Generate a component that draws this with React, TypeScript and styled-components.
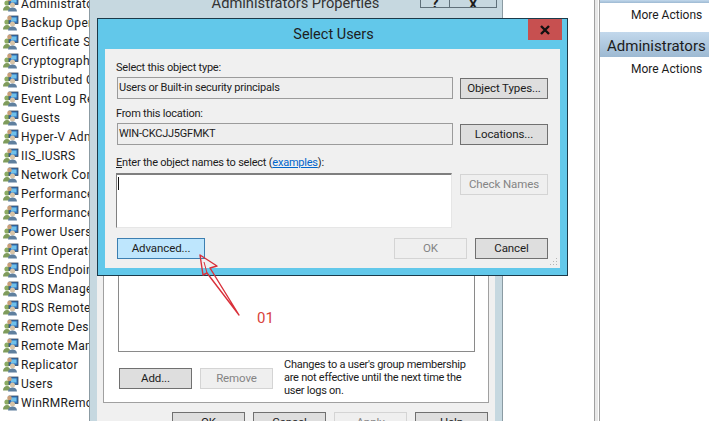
import React from "react";
import styled, { createGlobalStyle } from "styled-components";

const Global = createGlobalStyle`
  html, body { margin: 0; padding: 0; background: #fff; }
  body { font-family: Roboto, "Liberation Sans", sans-serif; font-size: 11px; color: #1c1c1c; }
`;

const Desktop = styled.div`
  position: relative;
  width: 709px;
  height: 421px;
  overflow: hidden;
  background: #fff;
`;

const GroupList = styled.ul`
  margin: -6px 0 0;
  padding: 0 0 0 3px;
  list-style: none;
  width: 86px;
  overflow: hidden;
`;

const GroupRow = styled.li`
  display: flex;
  align-items: center;
  gap: 2px;
  height: 19px;
  white-space: nowrap;
  font-size: 12px;
  letter-spacing: 0.3px;
`;

const IconSvg = styled.svg`
  flex: none;
`;

const ActionPane = styled.aside`
  position: absolute;
  top: 0;
  left: 594px;
  width: 115px;
  height: 421px;
  box-sizing: border-box;
  border-left: 1px solid #a0a0a0;
  padding-left: 4px;
  background: linear-gradient(#e8e8e8, #e8e8e8) 0 0 / 3px 100% no-repeat, #fff;
`;

const ActionHead = styled.div<{ $h: number }>`
  height: ${(p) => p.$h}px;
  border-left: 1px solid #a0a0a0;
  background: linear-gradient(#c2d8ec, #9db9d2);
  padding-left: 7px;
  font-size: 15px;
  line-height: 28px;
  white-space: nowrap;
  color: #1c1c1c;
`;

const ActionLink = styled.div<{ $h: number }>`
  height: ${(p) => p.$h}px;
  border-left: 1px solid #a0a0a0;
  padding: 4px 0 0 31px;
  box-sizing: border-box;
  white-space: nowrap;
  font-size: 12px;
  line-height: 16px;
`;

const PropsWindow = styled.section`
  position: absolute;
  left: 89px;
  top: -10px;
  width: 414px;
  height: 450px;
  box-sizing: border-box;
  border: 1px solid #8b9ba3;
  border-top: 0;
  background: #c6d8e0;
  padding: 0 7px;
  display: flex;
  flex-direction: column;
`;

const PropsTitleBar = styled.header`
  display: flex;
  align-items: flex-start;
  height: 30px;
  flex: none;
`;

const PropsTitle = styled.div`
  flex: 1;
  text-align: center;
  font-size: 14.7px;
  line-height: 26px;
  color: #333;
  padding-left: 74px;
`;

const Caption = styled.div`
  display: flex;
  height: 18px;
  flex: none;
  margin-right: -2px;
  border: 1px solid #5f707a;
  border-top: 0;
  box-sizing: border-box;
  background: #c6d8e0;
`;

const CaptionCell = styled.div<{ $w: number }>`
  width: ${(p) => p.$w}px;
  box-sizing: border-box;
  & + & { border-left: 1px solid #5f707a; }
  text-align: center;
  font-size: 15px;
  font-weight: 700;
  line-height: 26px;
  overflow: hidden;
`;

const PropsBody = styled.div`
  flex: 1;
  background: #f0f0f0;
  padding: 0 6px;
`;

const GroupBox = styled.div`
  height: 383px;
  box-sizing: border-box;
  border: 1px solid #a0a0a0;
  border-top: 0;
  background: #fff;
  padding: 0 13px 0 14px;
  display: flex;
  flex-direction: column;
  justify-content: flex-end;
`;

const MemberList = styled.div`
  height: 80px;
  flex: none;
  margin-bottom: 16px;
  box-sizing: border-box;
  border: 1px solid #8a8a8a;
  border-top: 0;
  background: #fff;
`;

const MemberActions = styled.div`
  display: flex;
  align-items: flex-start;
  gap: 8px;
  margin: 0 0 0 1px;
  height: 34px;
`;

const HelpText = styled.p`
  margin: -10px 0 0 3px;
  flex: none;
  line-height: 13px;
  font-size: 11px;
  letter-spacing: -0.25px;
  width: 186px;
`;

const PropsFooter = styled.div`
  display: flex;
  justify-content: flex-end;
  gap: 8px;
  margin-top: 9px;
  padding-right: 1px;
`;

const Btn = styled.div<{ $w?: number; $off?: boolean; $hot?: boolean }>`
  flex: none;
  width: ${(p) => p.$w ?? 73}px;
  height: 21px;
  box-sizing: border-box;
  border: 1px solid ${(p) => (p.$hot ? "#3c7fb1" : p.$off ? "#d4d4d4" : "#707070")};
  background: ${(p) => (p.$hot ? "#bee6fd" : p.$off ? "#efefef" : "#dedede")};
  color: ${(p) => (p.$off ? "#848484" : "#1c1c1c")};
  text-align: center;
  font-size: 11.5px;
  letter-spacing: -0.1px;
  line-height: 19px;
`;

const Dialog = styled.section`
  position: absolute;
  left: 97px;
  top: 18px;
  width: 471px;
  height: 258px;
  box-sizing: border-box;
  border: 1px solid #1b3a4a;
  background: #62c8ea;
  padding: 0 7px 7px;
  display: flex;
  flex-direction: column;
`;

const DialogTitleBar = styled.header`
  height: 30px;
  flex: none;
  display: flex;
`;

const DialogTitle = styled.div`
  flex: 1;
  text-align: center;
  font-size: 14.5px;
  line-height: 31px;
  color: #1e1e1e;
  padding-left: 34px;
`;

const CloseBtn = styled.div`
  width: 34px;
  height: 21px;
  margin-right: -2px;
  background: #c75050;
  display: flex;
  align-items: center;
  justify-content: center;
`;

const Panel = styled.div`
  flex: 1;
  background: #f0f0f0;
  padding: 11px 11px 0;
  display: flex;
  flex-direction: column;
  position: relative;
`;

const Label = styled.div<{ $mt?: number }>`
  height: 15px;
  line-height: 15px;
  font-size: 11px;
  letter-spacing: -0.22px;
  margin-top: ${(p) => p.$mt ?? 0}px;
`;

const Row = styled.div<{ $mt?: number }>`
  display: flex;
  gap: 7px;
  margin: ${(p) => p.$mt ?? 0}px 0 0 1px;
`;

const ReadField = styled.div`
  width: 336px;
  height: 22px;
  box-sizing: border-box;
  border: 1px solid #9b9b9b;
  background: #eeeeee;
  padding-left: 1px;
  line-height: 19px;
  font-size: 11px;
  letter-spacing: -0.22px;
`;

const ButtonNudge = styled.div`
  margin-top: 1px;
`;

const NamesBox = styled.div`
  width: 336px;
  height: 55px;
  margin: 0 1px 0 -1px;
  box-sizing: border-box;
  border-style: solid;
  border-width: 2px 1px 1px 1px;
  border-color: #7f7f7f #e6e6e6 #e6e6e6 #7f7f7f;
  background: #fff;
  padding: 2px 0 0 1px;
`;

const Caret = styled.div`
  width: 1px;
  height: 13px;
  background: #111;
`;

const BottomRow = styled.div`
  display: flex;
  margin: 10px 0 0 1px;
  gap: 8px;
`;

const Spacer = styled.div`
  flex: none;
  width: 173px;
`;

const Link = styled.span`
  color: #0066cc;
  text-decoration: underline;
`;

const Underlined = styled.span`
  text-decoration: underline;
`;

const Grip = styled.svg`
  position: absolute;
  right: 2px;
  bottom: 2px;
`;

const ArrowLayer = styled.svg`
  position: absolute;
  left: 190px;
  top: 250px;
  overflow: visible;
`;

const StepLabel = styled.div`
  position: absolute;
  left: 257px;
  top: 309px;
  color: #d9423c;
  font-size: 15px;
  line-height: 18px;
`;

const GroupIcon = () => (
  <IconSvg width="16" height="16" viewBox="0 0 16 16">
    <circle cx="4" cy="7" r="2.6" fill="#8cab62" />
    <path d="M0 14.500c0-3 1.600-4.500 4-4.500s3.500 1.500 3.500 4.500z" fill="#7f9c5c" />
    <rect x="6" y="1" width="9" height="7.500" fill="#2f6fb8" stroke="#3a4a5e" strokeWidth="0.8" />
    <rect x="8" y="2.500" width="5.500" height="4" fill="#6fc0ea" />
    <circle cx="6.500" cy="3" r="2.300" fill="#c99e78" />
    <circle cx="9.500" cy="9" r="2.500" fill="#d7c4a8" />
    <path d="M5 15.500c0-2.800 2-4 4.500-4s4.500 1.200 4.500 4z" fill="#5f7f9e" />
  </IconSvg>
);

const groups = [
  "Administrators",
  "Backup Operators",
  "Certificate Service",
  "Cryptographic Operators",
  "Distributed COM",
  "Event Log Readers",
  "Guests",
  "Hyper-V Administrators",
  "IIS_IUSRS",
  "Network Configuration",
  "Performance Log",
  "Performance Monitor",
  "Power Users",
  "Print Operators",
  "RDS Endpoint",
  "RDS Management",
  "RDS Remote",
  "Remote Desktop",
  "Remote Management",
  "Replicator",
  "Users",
  "WinRMRemoteWMI",
];

export default function App() {
  return (
    <Desktop>
      <Global />
      <GroupList>
        {groups.map((g) => (
          <GroupRow key={g}>
            <GroupIcon />
            {g}
          </GroupRow>
        ))}
      </GroupList>

      <ActionPane>
        <ActionHead $h={3} />
        <ActionLink $h={29}>More Actions</ActionLink>
        <ActionHead $h={25}>Administrators</ActionHead>
        <ActionLink $h={364}>More Actions</ActionLink>
      </ActionPane>

      <PropsWindow>
        <PropsTitleBar>
          <PropsTitle>Administrators Properties</PropsTitle>
          <Caption>
            <CaptionCell $w={28}>?</CaptionCell>
            <CaptionCell $w={47}>x</CaptionCell>
          </Caption>
        </PropsTitleBar>
        <PropsBody>
          <GroupBox>
            <MemberList />
            <MemberActions>
              <Btn>Add...</Btn>
              <Btn $off>Remove</Btn>
              <HelpText>
                Changes to a user's group membership are not effective until the next time the user logs on.
              </HelpText>
            </MemberActions>
          </GroupBox>
          <PropsFooter>
            <Btn>OK</Btn>
            <Btn>Cancel</Btn>
            <Btn $off>Apply</Btn>
            <Btn>Help</Btn>
          </PropsFooter>
        </PropsBody>
      </PropsWindow>

      <Dialog>
        <DialogTitleBar>
          <DialogTitle>Select Users</DialogTitle>
          <CloseBtn>
            <svg width="12" height="10" viewBox="0 0 12 10">
              <path d="M2 1l8 8M10 1l-8 8" stroke="#111" strokeWidth="2.400" fill="none" />
            </svg>
          </CloseBtn>
        </DialogTitleBar>
        <Panel>
          <Label>Select this object type:</Label>
          <Row $mt={2}>
            <ReadField>Users or Built-in security principals</ReadField>
            <ButtonNudge>
              <Btn $w={88}>Object Types...</Btn>
            </ButtonNudge>
          </Row>
          <Label $mt={7}>From this location:</Label>
          <Row $mt={2}>
            <ReadField>WIN-CKCJJ5GFMKT</ReadField>
            <ButtonNudge>
              <Btn $w={88}>Locations...</Btn>
            </ButtonNudge>
          </Row>
          <Label $mt={10}>
            <Underlined>E</Underlined>nter the object names to select (<Link>examples</Link>):
          </Label>
          <Row $mt={3}>
            <NamesBox>
              <Caret />
            </NamesBox>
            <ButtonNudge>
              <Btn $w={88} $off>Check Names</Btn>
            </ButtonNudge>
          </Row>
          <BottomRow>
            <Btn $w={88} $hot>Advanced...</Btn>
            <Spacer />
            <Btn $off>OK</Btn>
            <Btn>Cancel</Btn>
          </BottomRow>
          <Grip width="8" height="8" viewBox="0 0 8 8">
            <path d="M6 0h1v1H6zM6 3h1v1H6zM3 3h1v1H3zM6 6h1v1H6zM3 6h1v1H3zM0 6h1v1H0z" fill="#b5b5b5" />
          </Grip>
        </Panel>
      </Dialog>

      <ArrowLayer width="70" height="80" viewBox="0 0 70 80">
        <path d="M10 5L27 16L20 18L49 65L17 23L13 25Z" fill="none" stroke="#d9303a" strokeWidth="1.400" strokeLinejoin="round" />
        <path d="M17 23L14 12" fill="none" stroke="#d9303a" strokeWidth="1" />
      </ArrowLayer>
      <StepLabel>01</StepLabel>
    </Desktop>
  );
}
